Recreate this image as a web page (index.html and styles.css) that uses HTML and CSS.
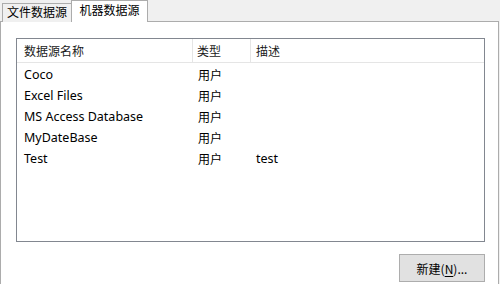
FILE: index.html
```html
<!DOCTYPE html>
<html>
<head>
<meta charset="utf-8">
<link rel="stylesheet" href="styles.css">
</head>
<body>
<div class="tabs">
  <div class="tab">文件数据源</div>
  <div class="tab active">机器数据源</div>
</div>
<div class="panel">
  <div class="list">
    <div class="row head">
      <div class="cell">数据源名称</div>
      <div class="cell">类型</div>
      <div class="cell">描述</div>
    </div>
    <div class="body">
      <div class="row"><div class="cell">Coco</div><div class="cell">用户</div><div class="cell"></div></div>
      <div class="row"><div class="cell">Excel Files</div><div class="cell">用户</div><div class="cell"></div></div>
      <div class="row"><div class="cell">MS Access Database</div><div class="cell">用户</div><div class="cell"></div></div>
      <div class="row"><div class="cell">MyDateBase</div><div class="cell">用户</div><div class="cell"></div></div>
      <div class="row"><div class="cell">Test</div><div class="cell">用户</div><div class="cell">test</div></div>
    </div>
  </div>
  <div class="actions">
    <button class="btn">新建(<u>N</u>)...</button>
  </div>
</div>
</body>
</html>
```
FILE: styles.css
```css
html, body {
  margin: 0;
  padding: 0;
  background: #f0f0f0;
  font-family: "Noto Sans", "Noto Sans CJK SC", sans-serif;
  font-size: 12px;
  color: #000;
  overflow: hidden;
  height: 284px;
}
.tabs {
  display: flex;
  align-items: flex-end;
  height: 22px;
  padding-left: 2px;
  position: relative;
  z-index: 1;
}
.tab {
  box-sizing: border-box;
  height: 19px;
  width: 70px;
  border: 1px solid #acacac;
  border-bottom: none;
  background: #f0f0f0;
  display: flex;
  align-items: center;
  justify-content: center;
  font-size: 12px;
  line-height: 1;
  color: #000;
}
.tab.active {
  height: 22px;
  width: 77px;
  margin-left: -1px;
  background: #fff;
  padding-bottom: 2px;
}
.panel {
  box-sizing: border-box;
  width: 499px;
  height: 263px;
  margin-top: -1px;
  border: 1px solid #acacac;
  border-bottom: none;
  background: #fff;
  padding: 16px 0 0 15px;
}
.list {
  box-sizing: border-box;
  width: 469px;
  height: 204px;
  border: 1px solid #828790;
  background: #fff;
}
.row {
  display: grid;
  grid-template-columns: 176px 58px 1fr;
  height: 21px;
  align-items: center;
  font-size: 12.5px;
}
.row .cell {
  padding-left: 7px;
  white-space: nowrap;
}
.row .cell:nth-child(2),
.row .cell:nth-child(3) { padding-left: 5px; font-size: 12px; }
.body .row .cell:nth-child(3) { font-size: 12.5px; }
.head {
  height: 23px;
  border-bottom: 1px solid #e5e5e5;
  align-items: stretch;
  color: #1a1a1a;
  font-size: 12px;
}
.head .cell {
  display: flex;
  align-items: center;
  border-right: 1px solid #e5e5e5;
}
.head .cell:nth-child(2) { padding-left: 4px; }
.head .cell:nth-child(3) { border-right: none; }
.body {
  padding-top: 1px;
}
.actions {
  width: 469px;
  display: flex;
  justify-content: flex-end;
  margin-top: 12px;
}
.btn {
  box-sizing: border-box;
  width: 86px;
  height: 28px;
  border: 1px solid #adadad;
  background: #e1e1e1;
  font-family: "Noto Sans CJK SC", "Noto Sans", sans-serif;
  font-size: 12px;
  color: #000;
  padding: 0;
}
.btn u {
  text-underline-offset: 2px;
}
```
